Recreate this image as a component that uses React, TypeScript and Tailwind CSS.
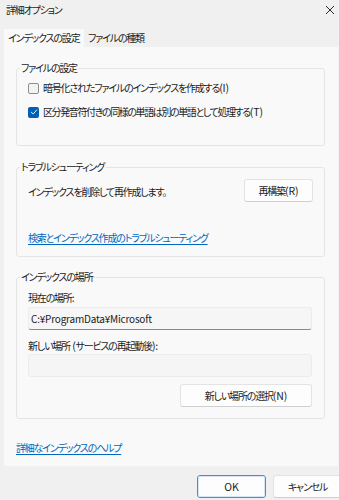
import React from 'react';

const Checkbox: React.FC<{ checked?: boolean }> = ({ checked }) =>
    checked ? (
        <span className="flex w-[11px] h-[11px] shrink-0 items-center justify-center rounded-[2px] bg-[#005fb8]">
            <svg width="8" height="8" viewBox="0 0 8 8" fill="none">
                <path d="M1.3 4.2 L3.2 6 L6.8 1.9" stroke="#ffffff" strokeWidth="0.9" strokeLinecap="round" strokeLinejoin="round" />
            </svg>
        </span>
    ) : (
        <span className="block w-[11px] h-[11px] shrink-0 rounded-[2px] border border-[#8d8d8d] bg-[#f3f3f3]" />
    );

// latin bits keep normal spacing, kana/kanji get squeezed
const Latin: React.FC<{ children: React.ReactNode }> = ({ children }) => (
    <span className="text-[10.5px] tracking-[-0.1px]">{children}</span>
);

const Button: React.FC<{ label: string; accel?: string; className?: string }> = ({ label, accel, className = '' }) => (
    <button
        type="button"
        className={`h-[23px] rounded-[3px] border border-[#e3e3e3] border-b-[#cfcfcf] bg-[#fdfdfd] text-[10px] leading-[14px] tracking-[-1.2px] text-[#1b1b1b] ${className}`}
    >
        {label}
        {accel && <Latin>{accel}</Latin>}
    </button>
);

const Group: React.FC<{ title: string; className?: string; children: React.ReactNode }> = ({ title, className = '', children }) => (
    <fieldset className={`w-[309px] rounded-[3px] border border-[#e5e5e5] ${className}`}>
        <legend className="ml-[3px] px-[1px] text-[10px] leading-[14px] tracking-[-1.2px] text-[#1b1b1b]">{title}</legend>
        <div className="px-[11px]">{children}</div>
    </fieldset>
);

export default function App() {
    return (
        <div className="w-[339px] h-[500px] overflow-hidden bg-[#f0f0f0] text-[#1b1b1b] text-[10px] leading-[14px] tracking-[-1.2px] font-['Noto_Sans_CJK_JP','Liberation_Sans',sans-serif] [font-feature-settings:'palt'] select-none">
            {/* Title bar */}
            <div className="flex h-[29px] items-start justify-between pt-[3px] pl-[6px] pr-[4px]">
                <span>詳細オプション</span>
                <svg width="10" height="10" viewBox="0 0 10 10" className="mt-[2px]">
                    <path d="M1 1 L9 9 M9 1 L1 9" stroke="#2b2b2b" strokeWidth="1" />
                </svg>
            </div>

            {/* Tabs */}
            <div className="flex h-[18px] items-end pl-[4px] whitespace-nowrap">
                <div className="flex h-[18px] w-[80px] items-center pl-[4px] bg-[#f9f9f9]">
                    インデックスの設定
                </div>
                <div className="flex h-[16px] w-[63px] items-center pl-[4px] mb-[1px] bg-[#f0f0f0]">
                    ファイルの種類
                </div>
            </div>

            {/* Panel */}
            <div className="ml-[4px] w-[334px] h-[419px] bg-[#f9f9f9] pt-[14px] px-[12px] whitespace-nowrap">
                <Group title="ファイルの設定" className="pb-[25px]">
                    <label className="mt-[5px] flex h-[16px] items-center gap-[4px]">
                        <Checkbox />
                        <span>暗号化されたファイルのインデックスを作成する<Latin>(I)</Latin></span>
                    </label>
                    <label className="mt-[8px] flex h-[16px] items-center gap-[4px]">
                        <Checkbox checked />
                        <span className="tracking-[-1.4px]">区分発音符付きの同様の単語は別の単語として処理する<Latin>(T)</Latin></span>
                    </label>
                </Group>

                <Group title="トラブルシューティング" className="mt-[14px] pb-[11px]">
                    <div className="mt-[5px] flex h-[23px] items-center justify-between">
                        <span className="mt-[2px]">インデックスを削除して再作成します。</span>
                        <Button label="再構築" accel="(R)" className="w-[69px]" />
                    </div>
                    <a href="#" className="mt-[29px] block w-fit text-[#0067c0] underline underline-offset-2">
                        検索とインデックス作成のトラブルシューティング
                    </a>
                </Group>

                <Group title="インデックスの場所" className="mt-[13px] pb-[11px]">
                    <div className="mt-[7px]">現在の場所<Latin>:</Latin></div>
                    <div className="mt-[2px] flex h-[23px] w-[284px] items-center rounded-[3px] border border-[#ececec] border-b-[#8a8a8a] bg-[#f6f6f6] pl-[2px]">
                        <span className="text-[10px] tracking-[-0.2px]">C:¥ProgramData¥Microsoft</span>
                    </div>
                    <div className="mt-[9px]">新しい場所<Latin> (</Latin>サービスの再起動後<Latin>):</Latin></div>
                    <div className="mt-[1px] h-[23px] w-[284px] rounded-[3px] border border-[#ececec] bg-[#f5f5f5]" />
                    <div className="mt-[7px] flex w-[284px] justify-end">
                        <Button label="新しい場所の選択" accel="(N)" className="w-[132px]" />
                    </div>
                </Group>

                <a href="#" className="mt-[22px] block w-fit text-[#0067c0] underline underline-offset-2">
                    詳細なインデックスのヘルプ
                </a>
            </div>

            {/* Footer */}
            <div className="flex justify-end gap-[7px] pt-[9px] -mr-[3px]">
                <button
                    type="button"
                    className="h-[23px] w-[69px] rounded-[3px] border border-[#3f8fd6] bg-[#fdfdfd] outline outline-1 outline-offset-[-2px] outline-[#d3e5f7]"
                >
                    <Latin>OK</Latin>
                </button>
                <Button label="キャンセル" className="w-[69px]" />
            </div>
        </div>
    );
}
